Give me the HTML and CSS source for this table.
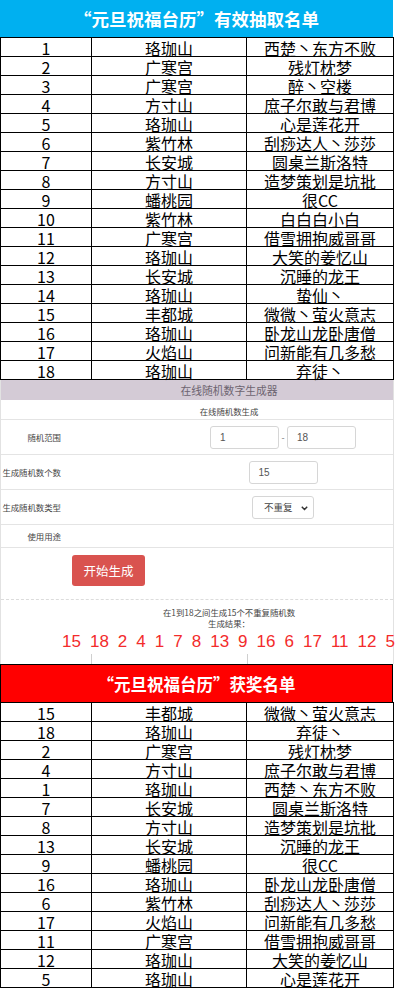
FILE: index.html
```html
<!DOCTYPE html>
<html lang="zh-CN">
<head>
<meta charset="utf-8">
<title>元旦祝福台历</title>
<link rel="stylesheet" href="styles.css">
</head>
<body>
<div class="page">
  <div class="title title-blue">“元旦祝福台历”有效抽取名单</div>
  <table class="sheet">
    <colgroup><col class="c1"><col class="c2"><col class="c3"></colgroup>
    <tbody>
      <tr><td>1</td><td>珞珈山</td><td>西楚丶东方不败</td></tr>
      <tr><td>2</td><td>广寒宫</td><td>残灯枕梦</td></tr>
      <tr><td>3</td><td>广寒宫</td><td>醉丶空楼</td></tr>
      <tr><td>4</td><td>方寸山</td><td>庶子尔敢与君博</td></tr>
      <tr><td>5</td><td>珞珈山</td><td>心是莲花开</td></tr>
      <tr><td>6</td><td>紫竹林</td><td>刮痧达人丶莎莎</td></tr>
      <tr><td>7</td><td>长安城</td><td>圆桌兰斯洛特</td></tr>
      <tr><td>8</td><td>方寸山</td><td>造梦策划是坑批</td></tr>
      <tr><td>9</td><td>蟠桃园</td><td>很CC</td></tr>
      <tr><td>10</td><td>紫竹林</td><td>白白白小白</td></tr>
      <tr><td>11</td><td>广寒宫</td><td>借雪拥抱威哥哥</td></tr>
      <tr><td>12</td><td>珞珈山</td><td>大笑的姜忆山</td></tr>
      <tr><td>13</td><td>长安城</td><td>沉睡的龙王</td></tr>
      <tr><td>14</td><td>珞珈山</td><td>蛰仙丶</td></tr>
      <tr><td>15</td><td>丰都城</td><td>微微丶萤火意志</td></tr>
      <tr><td>16</td><td>珞珈山</td><td>卧龙山龙卧唐僧</td></tr>
      <tr><td>17</td><td>火焰山</td><td>问新能有几多愁</td></tr>
      <tr><td>18</td><td>珞珈山</td><td>弃徒丶</td></tr>
    </tbody>
  </table>

  <section class="gen">
    <div class="gen-bar">在线随机数字生成器</div>
    <div class="gen-row gen-head"><span class="gen-sub">在线随机数生成</span></div>
    <div class="gen-row gen-tall">
      <div class="gen-label">随机范围</div>
      <div class="gen-field">
        <div class="inp">1</div>
        <span class="dash">-</span>
        <div class="inp">18</div>
      </div>
    </div>
    <div class="gen-row gen-tall">
      <div class="gen-label">生成随机数个数</div>
      <div class="gen-field"><div class="inp">15</div></div>
    </div>
    <div class="gen-row gen-tall">
      <div class="gen-label">生成随机数类型</div>
      <div class="gen-field">
        <div class="sel">不重复
          <svg class="chev" width="7" height="5" viewBox="0 0 7 5"><path d="M0.8 0.8 L3.5 3.6 L6.2 0.8" fill="none" stroke="#333" stroke-width="1.4"/></svg>
        </div>
      </div>
    </div>
    <div class="gen-row gen-short">
      <div class="gen-label">使用用途</div>
    </div>
    <div class="gen-btnrow">
      <div class="btn">开始生成</div>
    </div>
    <div class="gen-result">
      <div class="res-line">在1到18之间生成15个不重复随机数</div>
      <div class="res-line">生成结果：</div>
      <div class="nums">
        <span>15</span><span>18</span><span>2</span><span>4</span><span>1</span><span>7</span><span>8</span><span>13</span><span>9</span><span>16</span><span>6</span><span>17</span><span>11</span><span>12</span><span>5</span>
      </div>
    </div>
    <div class="gen-tail"><span class="t1"></span><span class="t2"></span><span class="t3"></span></div>
  </section>

  <div class="title title-red">“元旦祝福台历”获奖名单</div>
  <table class="sheet">
    <colgroup><col class="c1"><col class="c2"><col class="c3"></colgroup>
    <tbody>
      <tr><td>15</td><td>丰都城</td><td>微微丶萤火意志</td></tr>
      <tr><td>18</td><td>珞珈山</td><td>弃徒丶</td></tr>
      <tr><td>2</td><td>广寒宫</td><td>残灯枕梦</td></tr>
      <tr><td>4</td><td>方寸山</td><td>庶子尔敢与君博</td></tr>
      <tr><td>1</td><td>珞珈山</td><td>西楚丶东方不败</td></tr>
      <tr><td>7</td><td>长安城</td><td>圆桌兰斯洛特</td></tr>
      <tr><td>8</td><td>方寸山</td><td>造梦策划是坑批</td></tr>
      <tr><td>13</td><td>长安城</td><td>沉睡的龙王</td></tr>
      <tr><td>9</td><td>蟠桃园</td><td>很CC</td></tr>
      <tr><td>16</td><td>珞珈山</td><td>卧龙山龙卧唐僧</td></tr>
      <tr><td>6</td><td>紫竹林</td><td>刮痧达人丶莎莎</td></tr>
      <tr><td>17</td><td>火焰山</td><td>问新能有几多愁</td></tr>
      <tr><td>11</td><td>广寒宫</td><td>借雪拥抱威哥哥</td></tr>
      <tr><td>12</td><td>珞珈山</td><td>大笑的姜忆山</td></tr>
      <tr><td>5</td><td>珞珈山</td><td>心是莲花开</td></tr>
    </tbody>
  </table>
</div>
</body>
</html>
```

FILE: styles.css
```css
html, body {
  margin: 0;
  padding: 0;
  background: #fff;
  overflow-x: hidden;
}
body {
  font-family: "Noto Sans CJK SC", "Noto Sans", sans-serif;
  color: #000;
}
.page {
  width: 395px;
  overflow: hidden;
}
.title {
  width: 393px;
  box-sizing: border-box;
  height: 37px;
  display: flex;
  align-items: center;
  justify-content: center;
  color: #fff;
  font-weight: 700;
  font-size: 17.5px;
  letter-spacing: 0;
}
.title-blue {
  background: #00b0f0;
}
.title-red {
  background: #ff0000;
  height: 38px;
  border: 1px solid #000;
  border-bottom: 0;
  font-size: 16.5px;
}
.sheet {
  border-collapse: collapse;
  width: 393px;
  table-layout: fixed;
}
.sheet .c1 { width: 91px; }
.sheet .c2 { width: 155px; }
.sheet .c3 { width: 147px; }
.sheet td {
  border: 1px solid #000;
  height: 15px;
  padding: 3px 0 0;
  text-align: center;
  font-size: 16px;
  line-height: 15px;
  white-space: nowrap;
  font-weight: 400;
}

/* generator */
.gen {
  width: 394px;
  box-sizing: border-box;
  border-left: 1px solid #e2e2e2;
  border-right: 1px solid #e2e2e2;
  font-size: 8.4px;
  color: #555;
}
.gen-bar {
  height: 20px;
  background: #d4cbd6;
  display: flex;
  align-items: center;
  justify-content: center;
  padding-left: 64px;
  font-size: 10.8px;
  color: #6d6470;
}
.gen-row {
  display: flex;
  align-items: center;
  border-bottom: 1px solid #e4e4e4;
}
.gen-head {
  height: 19px;
  justify-content: center;
  padding-left: 64px;
  align-items: flex-end;
}
.gen-sub {
  padding-bottom: 2px;
  color: #444;
}
.gen-tall { height: 34px; }
.gen-short { height: 22px; }
.gen-label {
  width: 60px;
  text-align: right;
  color: #444;
  flex: none;
}
.gen-field {
  margin-left: 112px;
  flex: 1;
  display: flex;
  align-items: center;
  justify-content: center;
}
.inp {
  width: 69px;
  height: 23px;
  box-sizing: border-box;
  border: 1px solid #d6d6d6;
  border-radius: 3px;
  display: flex;
  align-items: center;
  padding-left: 9px;
  font-family: "Liberation Sans", Arial, sans-serif;
  font-size: 10px;
  color: #555;
}
.dash {
  width: 8px;
  text-align: center;
  color: #777;
  font-size: 9px;
}
.sel {
  width: 62px;
  height: 23px;
  box-sizing: border-box;
  border: 1px solid #d6d6d6;
  border-radius: 3px;
  display: flex;
  align-items: center;
  padding-left: 11px;
  font-size: 9.5px;
  color: #444;
  position: relative;
}
.chev {
  position: absolute;
  right: 5px;
  top: 9px;
}
.gen-btnrow {
  height: 52px;
  border-bottom: 1px dashed #dcdcdc;
  display: flex;
  align-items: flex-start;
  padding-top: 7px;
  box-sizing: border-box;
  padding-left: 71px;
}
.btn {
  width: 73px;
  height: 31px;
  background: #d9534f;
  border-radius: 3px;
  color: #fff;
  font-size: 12.5px;
  display: flex;
  align-items: center;
  justify-content: center;
}
.gen-result {
  height: 54px;
  box-sizing: border-box;
  padding-top: 7px;
}
.res-line {
  text-align: center;
  padding-left: 64px;
  line-height: 11px;
  color: #444;
}
.nums {
  display: flex;
  white-space: nowrap;
  gap: 9px;
  padding-left: 61px;
  margin-top: 3px;
  font-family: "Liberation Sans", Arial, sans-serif;
  font-size: 17px;
  line-height: 20px;
  color: #f32b2b;
}
.gen-tail {
  height: 10px;
  display: flex;
}
.gen-tail span { display: block; height: 10px; }
.gen-tail .t1 { width: 90px; }
.gen-tail .t2 { width: 155px; border-left: 1px solid #cfcfcf; }
.gen-tail .t3 { flex: 1; border-left: 1px solid #cfcfcf; }
```
